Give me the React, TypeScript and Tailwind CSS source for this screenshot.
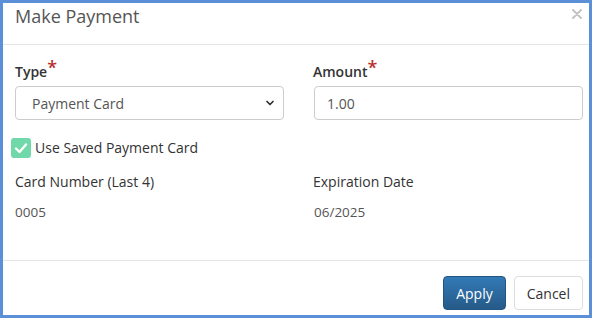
import { ChevronDown } from 'lucide-react'

export default function App() {
  return (
    <div className="w-[592px] h-[318px] border-[3px] border-[#5b8fd7] bg-white flex flex-col text-[#333] font-['Open_Sans',sans-serif]">
      {/* Header */}
      <div className="h-[42px] border-b border-[#e5e5e5] flex items-start justify-between pl-3 pr-[7px] shrink-0">
        <h4 className="text-[18px] leading-[26px] text-[#555]">Make Payment</h4>
        <button className="mt-[6px] w-[10px] h-[10px]">
          <svg viewBox="0 0 10 10" className="w-[10px] h-[10px]">
            <path d="M1 1 L9 9 M9 1 L1 9" stroke="#c4c4c4" strokeWidth="2" strokeLinecap="round" />
          </svg>
        </button>
      </div>

      {/* Body */}
      <div className="flex-1 pl-3 pr-[6px] pt-[16px]">
        <div className="grid grid-cols-2 gap-[30px]">
          <div>
            <label className="block text-[14px] font-semibold leading-[20px] text-[#333]">
              Type<span className="text-[#b9302a] text-[18px] leading-none relative top-[-3px]">*</span>
            </label>
            <div className="relative mt-[4px]">
              <select className="w-full h-[34px] appearance-none rounded-[4px] border border-[#ccc] pl-4 text-[14px] text-[#555] bg-white">
                <option>Payment Card</option>
              </select>
              <ChevronDown className="absolute right-[8px] top-[11px] w-[12px] h-[12px] text-[#333] pointer-events-none" strokeWidth={3.5} />
            </div>
          </div>
          <div>
            <label className="block text-[14px] font-semibold leading-[20px] text-[#333] ml-[-1px]">
              Amount<span className="text-[#b9302a] text-[18px] leading-none relative top-[-3px]">*</span>
            </label>
            <input
              readOnly
              value="1.00"
              className="mt-[4px] w-full h-[34px] rounded-[4px] border border-[#ccc] px-3 text-[14px] text-[#555] bg-white"
            />
          </div>
        </div>

        <div className="flex items-center mt-[17px] ml-[-4px] gap-[4px]">
          <span className="w-[20px] h-[20px] rounded-[3px] bg-[#71d9a9] flex items-center justify-center">
            <svg viewBox="0 0 20 20" className="w-[20px] h-[20px]">
              <path d="M5 10.5 L8.5 14 L15 6.5" fill="none" stroke="white" strokeWidth="2.4" strokeLinecap="round" strokeLinejoin="round" />
            </svg>
          </span>
          <span className="text-[14px] text-[#333]">Use Saved Payment Card</span>
        </div>

        <div className="grid grid-cols-2 gap-[30px] mt-[14px]">
          <div>
            <div className="text-[14px] leading-[20px] text-[#333]">Card Number (Last 4)</div>
            <div className="text-[13.5px] leading-[20px] text-[#555] mt-[10px]">0005</div>
          </div>
          <div>
            <div className="text-[14px] leading-[20px] text-[#333] ml-[-1px]">Expiration Date</div>
            <div className="text-[13.5px] leading-[20px] text-[#555] mt-[10px]">06/2025</div>
          </div>
        </div>
      </div>

      {/* Footer */}
      <div className="h-[55px] border-t border-[#e5e5e5] flex items-start justify-end gap-[8px] pr-[6px] pt-[15px] shrink-0">
        <button className="h-[34px] px-[12px] rounded-[4px] border border-[#245580] bg-gradient-to-b from-[#337ab7] to-[#265a88] text-white text-[14px]">
          Apply
        </button>
        <button className="h-[34px] px-[12px] rounded-[4px] border border-[#ddd] bg-white text-[#333] text-[14px]">
          Cancel
        </button>
      </div>
    </div>
  )
}
